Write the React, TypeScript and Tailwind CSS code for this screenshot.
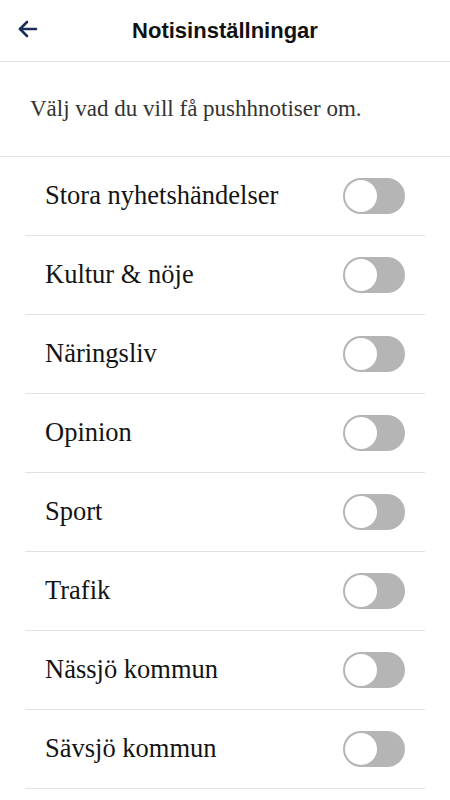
const topics = [
  "Stora nyhetshändelser",
  "Kultur & nöje",
  "Näringsliv",
  "Opinion",
  "Sport",
  "Trafik",
  "Nässjö kommun",
  "Sävsjö kommun",
]

const Toggle = () => (
  <div className="flex h-[36px] w-[62px] items-center rounded-full bg-[#b5b5b5] p-[2px]">
    <div className="h-[32px] w-[32px] rounded-full bg-white" />
  </div>
)

export default function App() {
  return (
    <div className="min-h-screen w-full bg-white font-['Liberation_Serif',serif]">
      <header className="relative flex h-[62px] items-center justify-center border-b border-[#e2e2e2]">
        <button className="absolute left-[16px] top-[17px] text-[#1c2d5a]">
          <svg width="24" height="24" viewBox="0 0 24 24" fill="none" stroke="currentColor" strokeWidth="2.6" strokeLinecap="round" strokeLinejoin="round">
            <path d="M20 12H4" />
            <path d="M11 5l-7 7 7 7" />
          </svg>
        </button>
        <h1 className="font-['Liberation_Sans',Arial,sans-serif] text-[22px] font-bold text-[#111]">
          Notisinställningar
        </h1>
      </header>
      <div className="flex h-[95px] items-center border-b border-[#e2e2e2] px-[30px]">
        <p className="text-[23px] text-[#333]">Välj vad du vill få pushhnotiser om.</p>
      </div>
      <ul className="mx-[25px]">
        {topics.map((t) => (
          <li
            key={t}
            className="flex h-[79px] items-center justify-between border-b border-[#e2e2e2] pl-[20px] pr-[20px]"
          >
            <span className="text-[26.5px] text-[#141414]">{t}</span>
            <Toggle />
          </li>
        ))}
      </ul>
    </div>
  )
}
